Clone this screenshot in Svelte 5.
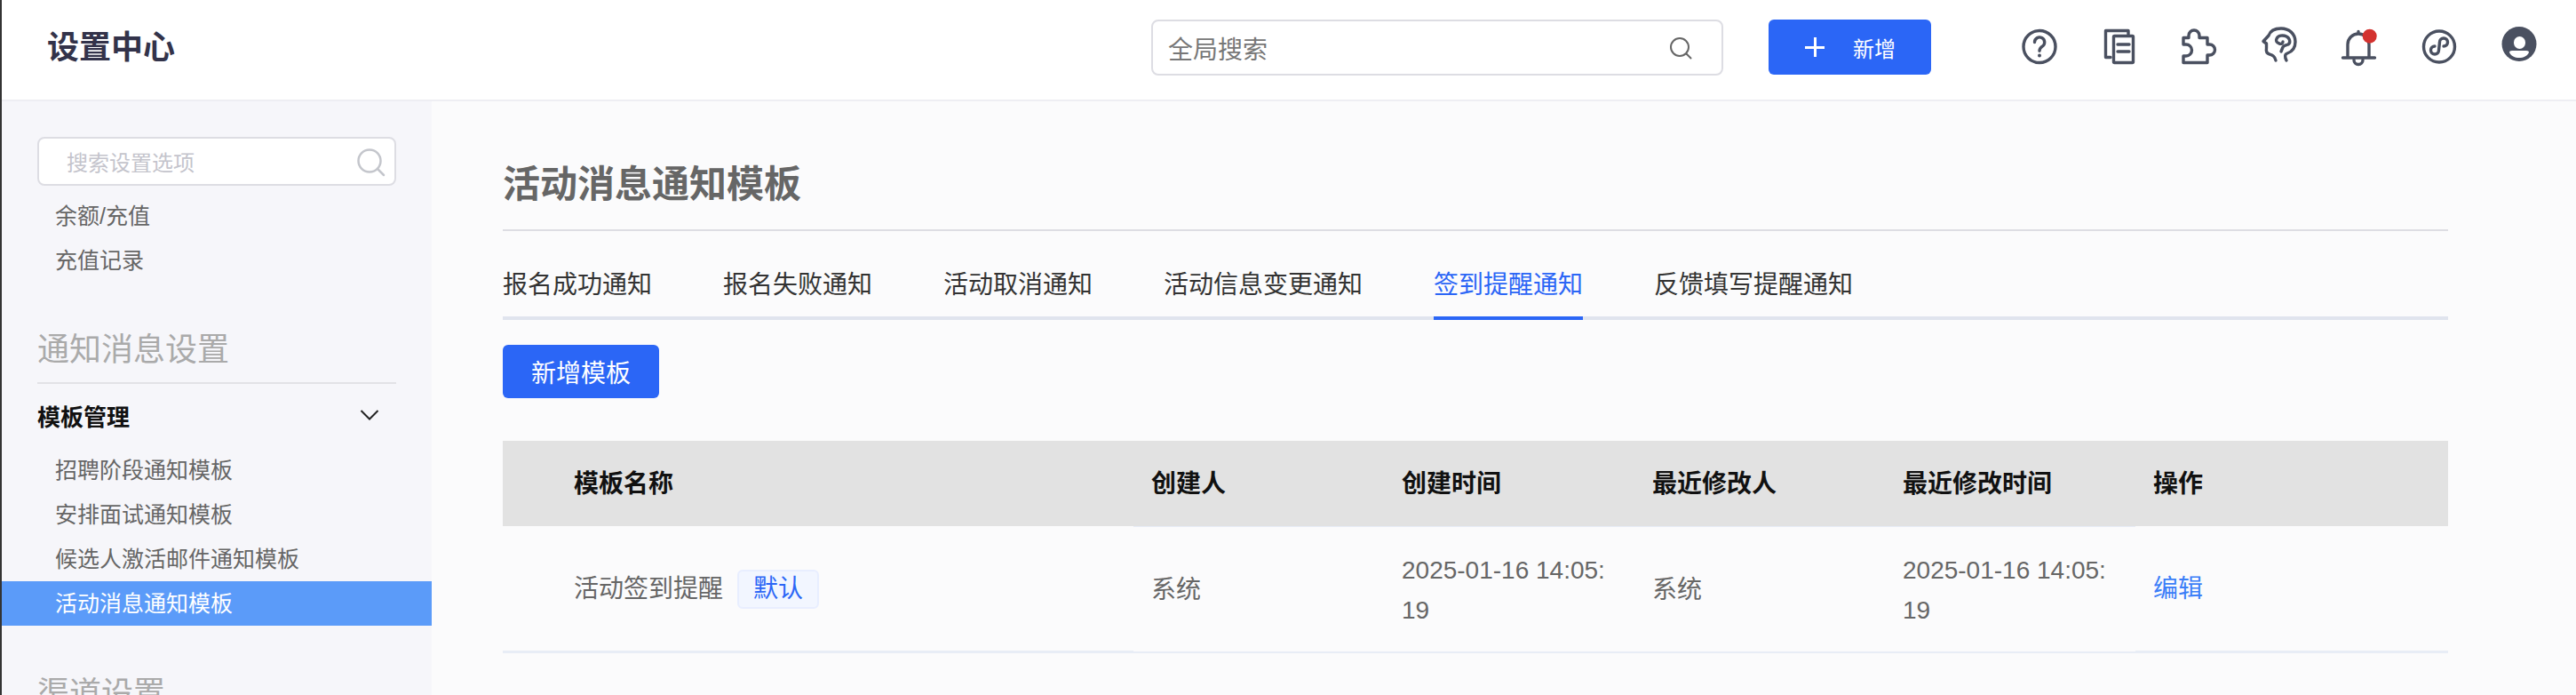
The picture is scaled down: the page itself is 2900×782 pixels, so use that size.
<script>
  const tabs = ['报名成功通知', '报名失败通知', '活动取消通知', '活动信息变更通知', '签到提醒通知', '反馈填写提醒通知'];
  const templates = ['招聘阶段通知模板', '安排面试通知模板', '候选人激活邮件通知模板', '活动消息通知模板'];
  const heads = ['模板名称', '创建人', '创建时间', '最近修改人', '最近修改时间', '操作'];
</script>

<div class="page">
  <header class="top">
    <div class="brand">设置中心</div>
    <div class="global-search">
      <span>全局搜索</span>
      <svg width="26" height="26" viewBox="0 0 26 26" fill="none" stroke="#666" stroke-width="2" stroke-linecap="round"><circle cx="12" cy="12" r="10"/><path d="M19.5 19.5 24.5 24.5"/></svg>
    </div>
    <button class="add"><i class="plus"></i><span>新增</span></button>
    <div class="icons">
      <div class="ico">
        <svg viewBox="0 0 40 40" fill="none"><circle cx="20" cy="19.5" r="18" /><path d="M14.5 14.5a5.6 5.6 0 1 1 9 4.5c-2.2 1.6-3.5 2.4-3.5 5.2"/><circle class="solid" cx="20" cy="29.5" r="2"/></svg>
      </div>
      <div class="ico">
        <svg viewBox="0 0 40 40" fill="none"><path d="M30 5.5V1.5H4.5V31.5H10"/><rect x="13.5" y="7.5" width="22" height="30" rx="1"/><path d="M18 17H31M18 25H31"/></svg>
      </div>
      <div class="ico">
        <svg viewBox="0 0 40 40" fill="none"><path d="M2 9.5H8V7A6 6 0 0 1 20 7V9.5H29V17H31.5A6 6 0 0 1 31.5 29H29V37.5H2V30H5A6.5 6.5 0 0 0 5 17H2Z"/></svg>
      </div>
      <div class="ico up">
        <svg viewBox="0 0 40 40" fill="none"><path d="M16 38C15 33 12 32 9 31C5 30 5 27 5.5 24L5.5 19L2 16.5L8 10C10 4 16 2 22 2C31 2 38 8 38 17C38 24 35 28 29 30C26 31 26 34 28 38"/><path d="M20 19C16.5 18 16 15.5 17 13.5C18.500 10 24 9 28 11C32 13 33 18 30 20C27 21 25 21 24 23L22 28M20 19C22 20 24 19 24 17"/></svg>
      </div>
      <div class="ico">
        <svg viewBox="0 0 40 40" fill="none"><path d="M7 32V17A12 12 0 0 1 31 17V32M1.500 32H37.500M19 2.500V5M14 34.500A5 5 0 0 0 24 34.500"/><circle cx="31.700" cy="7.700" r="8" class="dot"/></svg>
      </div>
      <div class="ico">
        <svg viewBox="0 0 40 40" fill="none"><circle cx="20" cy="19.500" r="17.500" /><path d="M15 19A4.500 4.500 0 1 0 19.500 23.500L20.500 14.500A4.500 4.500 0 1 1 25 19"/></svg>
      </div>
      <div class="ico up">
        <svg viewBox="0 0 40 40" fill="none"><circle class="solid" cx="20" cy="19.500" r="19.500"/><rect x="14" y="11" width="13" height="14" rx="6.500" class="knock"/><path class="knock" d="M9 29Q9 27 12 27H28Q31 27 31 29C29 33 25 35 20 35C15 35 11 33 9 29Z"/></svg>
      </div>
    </div>
  </header>

  <div class="body">
    <aside class="side">
      <div class="side-search">
        <span>搜索设置选项</span>
        <svg width="32" height="32" viewBox="0 0 32 32" fill="none" stroke="#c4c6cc" stroke-width="2.500" stroke-linecap="round"><circle cx="14" cy="14" r="12.500"/><path d="M24 24 30 30"/></svg>
      </div>
      <div class="nav-item">余额/充值</div>
      <div class="nav-item">充值记录</div>

      <div class="group">通知消息设置</div>
      <div class="sub">
        <span>模板管理</span>
        <svg width="22" height="12" viewBox="0 0 22 12" fill="none" stroke="#222" stroke-width="2"><path d="M1.500 1 11 10.500 20.500 1"/></svg>
      </div>
      {#each templates as t, i}
        <div class="nav-item" class:active={i === 3}>{t}</div>
      {/each}

      <div class="group second">渠道设置</div>
    </aside>

    <main class="main">
      <h1>活动消息通知模板</h1>
      <nav class="tabs">
        {#each tabs as t, i}
          <div class="tab" class:on={i === 4}>{t}</div>
        {/each}
      </nav>
      <button class="new-btn">新增模板</button>

      <div class="table">
        {#each heads as h, i}
          <div class="th" class:fixed={i === 0 || i === 5} class:first={i === 0}>{h}</div>
        {/each}
        <div class="td fixed first">
          <span>活动签到提醒</span><em class="tag">默认</em>
        </div>
        <div class="td">系统</div>
        <div class="td">2025-01-16 14:05:19</div>
        <div class="td">系统</div>
        <div class="td">2025-01-16 14:05:19</div>
        <div class="td fixed"><span class="link">编辑</span></div>
      </div>
    </main>
  </div>
</div>

<style>
  :global(body) {
    margin: 0;
    background: #fbfbfc;
  }
  .page {
    width: 2900px;
    height: 782px;
    overflow: hidden;
    box-sizing: border-box;
    border-left: 2px solid #333;
    font-family: "Liberation Sans", "Noto Sans CJK SC", sans-serif;
    display: flex;
    flex-direction: column;
  }
  .top {
    height: 112px;
    flex: none;
    box-sizing: content-box;
    background: #fff;
    border-bottom: 2px solid #eeeef3;
    display: flex;
    align-items: flex-start;
  }
  .brand {
    margin: 29px 0 0 51px;
    width: 1243px;
    font-size: 36px;
    line-height: 50px;
    font-weight: 700;
    color: #33334a;
  }
  .global-search {
    box-sizing: border-box;
    margin-top: 22px;
    width: 644px;
    height: 63px;
    border: 2px solid #dddde3;
    border-radius: 8px;
    background: #fff;
    display: flex;
    align-items: center;
    justify-content: space-between;
    padding: 0 33px 0 17px;
    font-size: 28px;
    color: #777;
  }
  .add {
    box-sizing: border-box;
    margin: 22px 0 0 51px;
    width: 183px;
    height: 62px;
    border: 0;
    border-radius: 6px;
    background: #2b66f6;
    color: #fff;
    font: inherit;
    font-size: 24px;
    display: flex;
    align-items: center;
    padding: 0 0 0 41px;
  }
  .plus {
    position: relative;
    width: 22px;
    height: 22px;
    margin-right: 32px;
    background:
      linear-gradient(#fff, #fff) center / 100% 3px no-repeat,
      linear-gradient(#fff, #fff) center / 3px 100% no-repeat;
  }
  .icons {
    margin-left: 77px;
    display: flex;
  }
  .ico {
    width: 90px;
    padding-top: 33px;
    display: flex;
    justify-content: center;
  }
  .ico.up {
    padding-top: 30px;
  }
  .ico svg {
    width: 40px;
    height: 40px;
    overflow: visible;
    stroke: #4a5060;
    stroke-width: 3.400;
    stroke-linecap: round;
    stroke-linejoin: round;
  }
  .ico .solid {
    fill: #4a5060;
    stroke: none;
  }
  .ico .knock {
    fill: #fff;
    stroke: none;
  }
  .ico .dot {
    fill: #d3322f;
    stroke: none;
  }

  .body {
    flex: 1;
    display: flex;
    min-height: 0;
  }
  .side {
    width: 484px;
    flex: none;
    background: #f6f6fa;
    padding-top: 40px;
    overflow: hidden;
    box-sizing: border-box;
  }
  .side-search {
    box-sizing: border-box;
    margin: 0 0 9px 40px;
    width: 404px;
    height: 55px;
    border: 2px solid #dddde3;
    border-radius: 8px;
    background: #fff;
    display: flex;
    align-items: center;
    justify-content: space-between;
    padding: 0 10px 0 31px;
    font-size: 24px;
    color: #c4c4cc;
  }
  .side-search svg {
    margin-top: 3px;
  }
  .nav-item {
    height: 50px;
    line-height: 50px;
    padding-left: 60px;
    font-size: 25px;
    color: #666;
  }
  .nav-item.active {
    background: #5b9bf9;
    color: #fff;
  }
  .group {
    margin: 52px 0 0 40px;
    width: 404px;
    height: 48px;
    line-height: 48px;
    padding-bottom: 12px;
    border-bottom: 2px solid #e2e2e6;
    font-size: 36px;
    color: #aaa;
  }
  .group.second {
    margin-top: 53px;
    border: 0;
  }
  .sub {
    height: 72px;
    margin-left: 40px;
    width: 404px;
    padding: 0 19px 2px 0;
    box-sizing: border-box;
    display: flex;
    align-items: center;
    justify-content: space-between;
    font-size: 26px;
    font-weight: 700;
    color: #111;
  }

  .main {
    flex: 1;
    min-width: 0;
    padding: 0 144px 0 80px;
    display: flex;
    flex-direction: column;
    align-items: flex-start;
    background: #fbfbfc;
  }
  h1 {
    margin: 0;
    align-self: stretch;
    padding: 64px 0 20px;
    line-height: 60px;
    font-size: 42px;
    font-weight: 700;
    color: #666;
    border-bottom: 2px solid #dddde3;
  }
  .tabs {
    align-self: stretch;
    display: flex;
    gap: 80px;
    padding-top: 45px;
    border-bottom: 4px solid #e0e4ee;
  }
  .tab {
    height: 51px;
    line-height: 32px;
    margin-bottom: -4px;
    border-bottom: 4px solid transparent;
    font-size: 28px;
    color: #333;
  }
  .tab.on {
    color: #2b66f6;
    border-bottom-color: #2b66f6;
  }
  .new-btn {
    margin-top: 28px;
    width: 176px;
    height: 60px;
    border: 0;
    border-radius: 6px;
    background: #2b66f6;
    color: #fff;
    font: inherit;
    font-size: 28px;
    padding: 0;
  }
  .table {
    align-self: stretch;
    margin-top: 48px;
    display: grid;
    grid-template-columns: 710px repeat(4, 282px) 352px;
    grid-template-rows: 97px 142px;
  }
  .th {
    box-sizing: border-box;
    background: #e2e2e2;
    padding-left: 20px;
    font-size: 28px;
    font-weight: 700;
    color: #111;
    line-height: 98px;
    height: 97px;
    border-bottom: 1px solid #e8ecf6;
  }
  .th.fixed {
    height: 96px;
    border: 0;
  }
  .td {
    box-sizing: border-box;
    padding: 2px 20px 0;
    display: flex;
    align-items: center;
    font-size: 28px;
    line-height: 45.500px;
    color: #666;
    word-break: break-all;
    height: 142px;
    border-bottom: 2px solid #e8edf6;
  }
  .td.fixed {
    margin-top: -1px;
    height: 143px;
    border-bottom-width: 3px;
  }
  .first {
    padding-left: 80px;
  }
  .tag {
    box-sizing: border-box;
    margin-left: 16px;
    width: 92px;
    height: 44px;
    line-height: 40px;
    text-align: center;
    font-style: normal;
    color: #2b66f6;
    background: #f2f6ff;
    border: 2px solid #e8eeff;
    border-radius: 6px;
  }
  .link {
    color: #3b7ef8;
  }
</style>
